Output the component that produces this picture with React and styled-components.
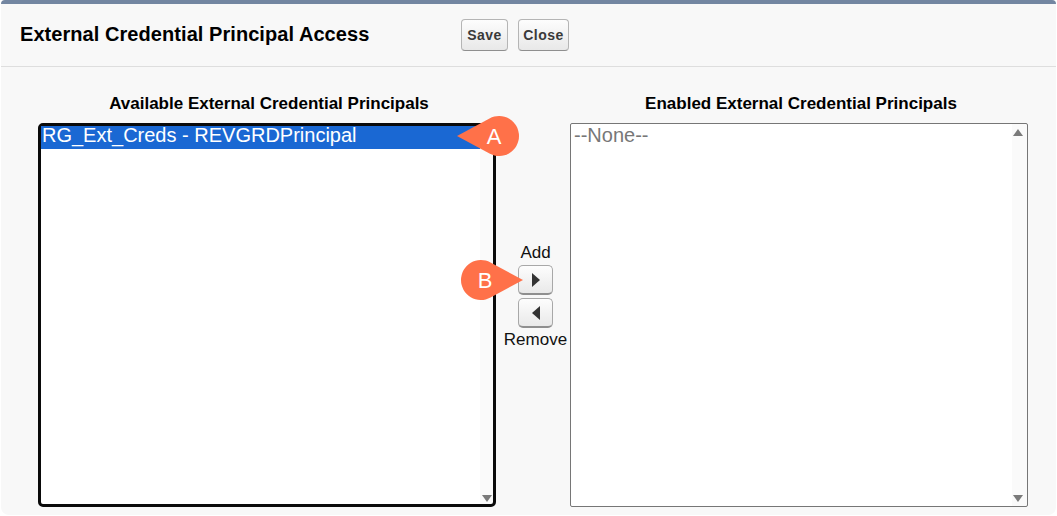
import styled, { createGlobalStyle } from "styled-components";

const GlobalStyle = createGlobalStyle`
  html, body {
    margin: 0;
    padding: 0;
    background: #fff;
    font-family: "Liberation Sans", Arial, sans-serif;
  }
`;

const Panel = styled.div`
  position: relative;
  box-sizing: border-box;
  width: 1055px;
  height: 515px;
  margin-left: 1px;
  background: #f8f8f8;
  border-top: 4px solid #7386a1;
  border-radius: 4px 4px 8px 8px;
  overflow: hidden;
`;

const Header = styled.div`
  box-sizing: border-box;
  height: 63px;
  display: flex;
  align-items: flex-start;
  padding: 15px 0 0 19px;
  border-bottom: 1px solid #dedede;
`;

const Title = styled.h1`
  width: 441px;
  margin: 3px 0 0;
  font-size: 20px;
  line-height: 24px;
  font-weight: 700;
  letter-spacing: 0.06px;
  color: #000;
`;

const Actions = styled.div`
  display: flex;
  gap: 10px;
`;

const Button = styled.button`
  box-sizing: border-box;
  width: ${({ $width }) => $width}px;
  height: 32px;
  padding: 0;
  border: 1px solid #b5b5b5;
  border-bottom-color: #8f8f8f;
  border-radius: 4px;
  background: linear-gradient(#fdfdfd, #e8e8e8);
  font-family: inherit;
  font-size: 14px;
  font-weight: 700;
  letter-spacing: 0.5px;
  color: #3a3a3a;
`;

const Body = styled.div`
  display: grid;
  grid-template-columns: 458px 74px 458px;
  padding: 27px 0 0 37px;
`;

const Column = styled.div`
  display: flex;
  flex-direction: column;
  align-items: center;
`;

const ColumnTitle = styled.div`
  height: 19px;
  margin-bottom: 10px;
  padding-left: 4px;
  font-size: 17px;
  line-height: 19px;
  font-weight: 700;
  white-space: nowrap;
  color: #000;
`;

const ListBox = styled.div`
  box-sizing: border-box;
  position: relative;
  width: 458px;
  height: 384px;
  background: linear-gradient(
    to right,
    #fff calc(100% - ${({ $focused }) => ($focused ? 13 : 15)}px),
    #fafafa calc(100% - ${({ $focused }) => ($focused ? 13 : 15)}px)
  );
  padding-right: ${({ $focused }) => ($focused ? 13 : 15)}px;
  border: ${({ $focused }) => ($focused ? "3px solid #0a0a0a" : "1px solid #767676")};
  border-radius: ${({ $focused }) => ($focused ? "5px" : "2px")};
`;

const Option = styled.div`
  height: 23px;
  padding-left: ${({ $selected }) => ($selected ? "1px" : "3px")};
  font-size: 20px;
  line-height: ${({ $selected }) => ($selected ? "19px" : "23px")};
  white-space: nowrap;
  color: ${({ $selected }) => ($selected ? "#fff" : "#777")};
  background: ${({ $selected }) => ($selected ? "#1a68d3" : "transparent")};
`;

const ScrollArrow = styled.svg`
  position: absolute;
  right: ${({ $focused }) => ($focused ? "1px" : "4px")};
  ${({ $dir, $focused }) =>
    $dir === "up" ? "top: 5px;" : `bottom: ${$focused ? 2 : 4}px;`}
  width: 10px;
  height: 7px;
  fill: #7a7a7a;
`;

const Mover = styled.div`
  display: flex;
  flex-direction: column;
  align-items: center;
  padding: 149px 0 0 5px;
`;

const MoverLabel = styled.div`
  font-size: 17px;
  line-height: 19px;
  color: #111;
`;

const MoverButtons = styled.div`
  display: flex;
  flex-direction: column;
  gap: 3px;
  margin: 3px 0 2px;
`;

const ArrowButton = styled.button`
  box-sizing: border-box;
  display: flex;
  align-items: center;
  justify-content: center;
  width: 35px;
  height: 30px;
  padding: 0;
  border: 1px solid #a8a8a8;
  border-bottom: 2px solid #8f8f8f;
  border-radius: 5px;
  background: linear-gradient(#fdfdfd, #e9e9e9);

  svg {
    width: 8px;
    height: 14px;
    fill: #333;
  }
`;

const Callout = styled.svg`
  position: absolute;
  left: ${({ $left }) => $left}px;
  top: ${({ $top }) => $top}px;
  width: 64px;
  height: 42px;
`;

const CalloutLetter = styled.text`
  font-family: "Liberation Sans", Arial, sans-serif;
  font-size: 22px;
  fill: #fff;
  text-anchor: middle;
`;

function Arrow({ left }) {
  return (
    <svg viewBox="0 0 8 14">
      <path d={left ? "M8 0 L0 7 L8 14 Z" : "M0 0 L8 7 L0 14 Z"} />
    </svg>
  );
}

function Scroll({ dir, focused }) {
  return (
    <ScrollArrow viewBox="0 0 10 7" $dir={dir} $focused={focused}>
      <path d={dir === "up" ? "M5 0 L10 7 L0 7 Z" : "M0 0 L10 0 L5 7 Z"} />
    </ScrollArrow>
  );
}

export default function App() {
  return (
    <>
      <GlobalStyle />
      <Panel>
        <Header>
          <Title>External Credential Principal Access</Title>
          <Actions>
            <Button $width={47}>Save</Button>
            <Button $width={51}>Close</Button>
          </Actions>
        </Header>
        <Body>
          <Column>
            <ColumnTitle>Available External Credential Principals</ColumnTitle>
            <ListBox $focused>
              <Option $selected>RG_Ext_Creds - REVGRDPrincipal</Option>
              <Scroll dir="down" focused />
            </ListBox>
          </Column>
          <Mover>
            <MoverLabel>Add</MoverLabel>
            <MoverButtons>
              <ArrowButton>
                <Arrow />
              </ArrowButton>
              <ArrowButton>
                <Arrow left />
              </ArrowButton>
            </MoverButtons>
            <MoverLabel>Remove</MoverLabel>
          </Mover>
          <Column>
            <ColumnTitle>Enabled External Credential Principals</ColumnTitle>
            <ListBox>
              <Option>--None--</Option>
              <Scroll dir="up" />
              <Scroll dir="down" />
            </ListBox>
          </Column>
        </Body>
        <Callout $left={456} $top={111} viewBox="0 0 64 42">
          <path d="M0 21 L32.5 3.4 A20 20 0 1 1 32.5 38.6 Z" fill="#ff7149" />
          <CalloutLetter x="37" y="29">A</CalloutLetter>
        </Callout>
        <Callout $left={459} $top={255} viewBox="0 0 64 42">
          <path d="M63 21 L30.5 38.6 A20 20 0 1 1 30.5 3.4 Z" fill="#ff7149" />
          <CalloutLetter x="25" y="29">B</CalloutLetter>
        </Callout>
      </Panel>
    </>
  );
}
